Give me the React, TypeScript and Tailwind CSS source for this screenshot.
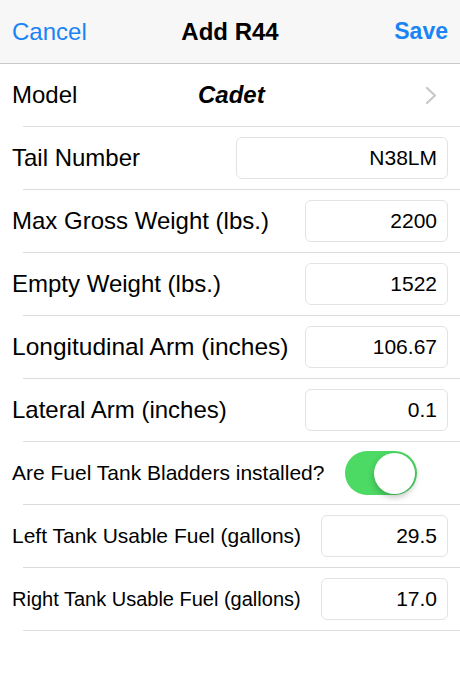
import React from "react";

const font = { fontFamily: '"Liberation Sans", Arial, sans-serif' };

function Separator() {
  return <div className="ml-[23px] h-px bg-[#dcdcdf]" />;
}

function FieldRow({
  label,
  value,
  boxW,
  labelSize,
}: {
  label: string;
  value: string;
  boxW: string;
  labelSize: string;
}) {
  return (
    <>
      <div className="flex h-[62px] items-center justify-between pl-[12px] pr-[12px]">
        <span className={`${labelSize} text-black whitespace-nowrap`}>{label}</span>
        <div
          className={`${boxW} flex h-[42px] items-center justify-end rounded-[6px] border border-[#e3e3e6] pr-[10px] text-[21px] text-black`}
        >
          {value}
        </div>
      </div>
      <Separator />
    </>
  );
}

export default function App() {
  return (
    <div className="w-[460px] h-[690px] bg-white" style={font}>
      {/* nav bar */}
      <div className="relative flex h-[64px] items-center justify-between border-b border-[#c9c9cc] bg-[#f7f7f7] px-[12px]">
        <span className="text-[24px] text-[#1a84f5]">Cancel</span>
        <span className="absolute left-1/2 -translate-x-1/2 text-[24px] font-bold text-black">
          Add R44
        </span>
        <span className="text-[23px] font-semibold text-[#1a84f5]">Save</span>
      </div>

      {/* model */}
      <div className="flex h-[62px] items-center pl-[12px] pr-[23px]">
        <span className="w-[186px] text-[24px] text-black">Model</span>
        <span className="text-[24px] font-bold italic text-black">Cadet</span>
        <svg className="ml-auto" width="12" height="19" viewBox="0 0 12 19" fill="none">
          <path d="M2 2l8 7.5L2 17" stroke="#c7c7cc" strokeWidth="2.2" strokeLinecap="round" strokeLinejoin="round" />
        </svg>
      </div>
      <Separator />

      <FieldRow label="Tail Number" value="N38LM" boxW="w-[212px]" labelSize="text-[24px]" />
      <FieldRow label="Max Gross Weight (lbs.)" value="2200" boxW="w-[143px]" labelSize="text-[24px]" />
      <FieldRow label="Empty Weight (lbs.)" value="1522" boxW="w-[143px]" labelSize="text-[24px]" />
      <FieldRow label="Longitudinal Arm (inches)" value="106.67" boxW="w-[143px]" labelSize="text-[24.5px]" />
      <FieldRow label="Lateral Arm (inches)" value="0.1" boxW="w-[143px]" labelSize="text-[24px]" />

      {/* toggle */}
      <div className="flex h-[62px] items-center pl-[12px]">
        <span className="w-[333px] text-[21px] text-black whitespace-nowrap">
          Are Fuel Tank Bladders installed?
        </span>
        <div className="relative h-[44px] w-[72px] rounded-full bg-[#4cd964]">
          <div className="absolute right-[2px] top-[1.5px] h-[41px] w-[41px] rounded-full bg-white shadow-[0_3px_6px_rgba(0,0,0,0.25)]" />
        </div>
      </div>
      <Separator />

      <FieldRow label="Left Tank Usable Fuel (gallons)" value="29.5" boxW="w-[127px]" labelSize="text-[21px]" />
      <FieldRow label="Right Tank Usable Fuel (gallons)" value="17.0" boxW="w-[127px]" labelSize="text-[20px]" />
    </div>
  );
}
